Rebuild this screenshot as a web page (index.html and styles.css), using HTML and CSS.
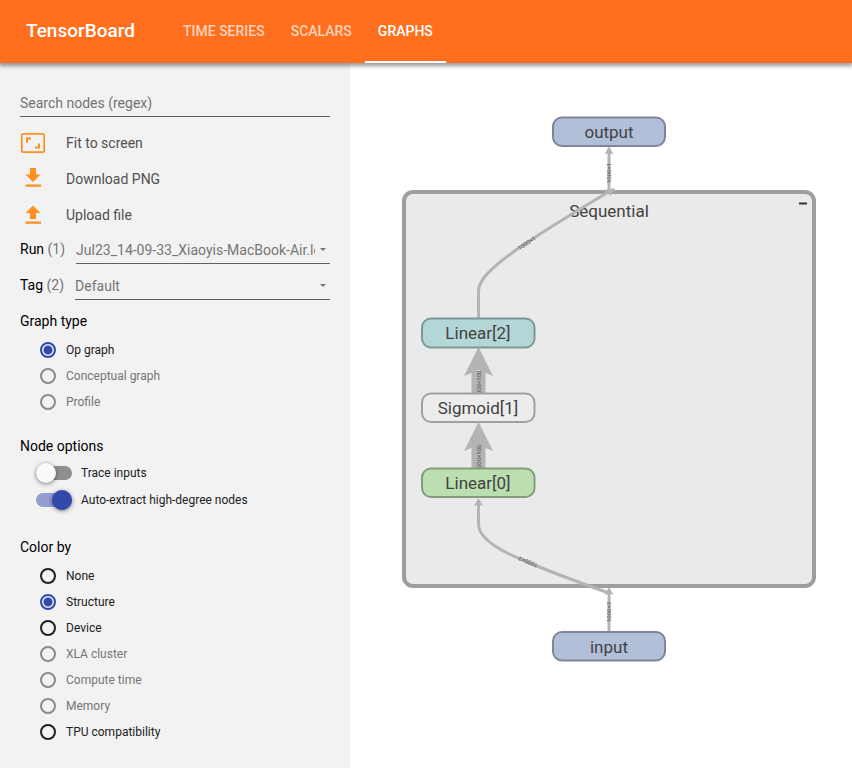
FILE: index.html
```html
<!DOCTYPE html>
<html lang="en">
<head>
<meta charset="utf-8">
<meta name="viewport" content="width=device-width, initial-scale=1">
<title>TensorBoard</title>
<link rel="stylesheet" href="styles.css">
</head>
<body>
<header class="toolbar">
  <h1 class="brand">TensorBoard</h1>
  <nav class="tabs">
    <a class="tab" href="#timeseries">TIME SERIES</a>
    <a class="tab" href="#scalars">SCALARS</a>
    <a class="tab tab-active" href="#graphs" aria-current="page">GRAPHS</a>
  </nav>
</header>
<div class="content">
  <aside class="sidebar">
    <input class="search" type="text" placeholder="Search nodes (regex)" aria-label="Search nodes (regex)">
    <div class="actions">
      <button class="action" type="button">
        <svg class="icon" viewBox="0 0 26 26"><path fill-rule="evenodd" d="M3 3h20a2 2 0 0 1 2 2v16a2 2 0 0 1-2 2H3a2 2 0 0 1-2-2V5a2 2 0 0 1 2-2zm-.3 1.700v16.600h20.600V4.700zM6 7.500h5v2H8v3H6zM20 18.500h-5v-2h3v-3h2z"/></svg>
        <span>Fit to screen</span>
      </button>
      <button class="action" type="button">
        <svg class="icon" viewBox="0 0 26 26"><path d="M10 2h6v6.500h4.500L13 16 5.500 8.500H10zM5.500 18.500h15.500v2.300h-15.500z"/></svg>
        <span>Download PNG</span>
      </button>
      <button class="action" type="button">
        <svg class="icon" viewBox="0 0 26 26"><path d="M10 17h6v-6h4.500L13 3.500 5.500 11H10zM5.500 19.500h15.500v2.300h-15.500z"/></svg>
        <span>Upload file</span>
      </button>
    </div>
    <div class="field">
      <label for="run">Run <span class="count">(1)</span></label>
      <div class="select-box"><select id="run"><option>Jul23_14-09-33_Xiaoyis-MacBook-Air.local</option></select></div>
    </div>
    <div class="field">
      <label for="tag">Tag <span class="count">(2)</span></label>
      <div class="select-box"><select id="tag"><option>Default</option></select></div>
    </div>
    <fieldset class="group group-type">
      <legend>Graph type</legend>
      <label class="choice"><input type="radio" name="type" checked>Op graph</label>
      <label class="choice"><input type="radio" name="type" disabled>Conceptual graph</label>
      <label class="choice"><input type="radio" name="type" disabled>Profile</label>
    </fieldset>
    <fieldset class="group group-toggles">
      <legend>Node options</legend>
      <label class="toggle"><input type="checkbox" role="switch">Trace inputs</label>
      <label class="toggle"><input type="checkbox" role="switch" checked>Auto-extract high-degree nodes</label>
    </fieldset>
    <fieldset class="group">
      <legend>Color by</legend>
      <label class="choice"><input type="radio" name="color">None</label>
      <label class="choice"><input type="radio" name="color" checked>Structure</label>
      <label class="choice"><input type="radio" name="color">Device</label>
      <label class="choice"><input type="radio" name="color" disabled>XLA cluster</label>
      <label class="choice"><input type="radio" name="color" disabled>Compute time</label>
      <label class="choice"><input type="radio" name="color" disabled>Memory</label>
      <label class="choice"><input type="radio" name="color">TPU compatibility</label>
    </fieldset>
  </aside>
  <main class="canvas">
    <svg class="graph" viewBox="350 63 502 705" preserveAspectRatio="xMidYMin meet">
      <rect class="scope" x="404" y="192" width="410" height="394" rx="9"/>
      <text class="name" x="609" y="217">Sequential</text>
      <path class="collapse" d="M799 203.500h8"/>

      <path class="edge" d="M609 192V152"/>
      <path class="head" d="M609 146l4.500 8.500-4.500-1.500-4.500 1.500z"/>
      <path class="edge" d="M478.500 318V291C478.500 280 491 268 516 250C546 229 580 209 610 191"/>
      <path class="head" d="M615 188l-4.500 8-2-3-4.500-3z"/>
      <path class="edge edge-wide" d="M478.500 394V371M478.500 469V446"/>
      <path class="head" d="M478.500 347l14.500 29-14.500-6-14.500 6zM478.500 422l14.500 29-14.500-6-14.500 6z"/>
      <path class="edge" d="M609 632V592"/>
      <path class="edge" d="M609 593C575 581 548 571 525 561C495 549 478.500 536 478.500 524V504"/>
      <path class="head" d="M609 587l4.500 8-4.500-1.500-4.500 1.500zM478.500 498l4.500 8-4.500-1.500-4.500 1.500z"/>

      <text class="shape" transform="translate(611 173) rotate(-90)">1000×1</text>
      <text class="shape" transform="translate(528 245) rotate(-33)">1000×1</text>
      <text class="shape" transform="translate(481 384) rotate(-90)">1000×100</text>
      <text class="shape" transform="translate(481 458) rotate(-90)">1000×100</text>
      <text class="shape" transform="translate(529 560) rotate(203)">1000×3</text>
      <text class="shape" transform="translate(611 612) rotate(-90)">1000×3</text>

      <rect class="node io" x="553" y="117.500" width="112" height="28.500" rx="9"/>
      <text class="name" x="609" y="138">output</text>
      <rect class="node linear-two" x="422" y="318.500" width="112.500" height="29" rx="9"/>
      <text class="name" x="478" y="339">Linear[2]</text>
      <rect class="node sigmoid" x="422" y="393.500" width="112.500" height="28.500" rx="9"/>
      <text class="name" x="478" y="414">Sigmoid[1]</text>
      <rect class="node linear-zero" x="422" y="468.500" width="112.500" height="28.500" rx="9"/>
      <text class="name" x="478" y="489">Linear[0]</text>
      <rect class="node io" x="553" y="632" width="112" height="28.500" rx="9"/>
      <text class="name" x="609" y="653">input</text>
    </svg>
  </main>
</div>
</body>
</html>
```
FILE: styles.css
```css
* {
  box-sizing: border-box;
}

body {
  display: flex;
  flex-direction: column;
  min-height: 100vh;
  margin: 0;
  background: #fff;
  color: #212121;
  font-family: Roboto, "Liberation Sans", sans-serif;
  font-size: 14px;
}

.toolbar {
  position: relative;
  z-index: 1;
  display: flex;
  align-items: stretch;
  gap: 35px;
  height: 63px;
  padding-left: 26px;
  background: #ff6f1e;
  box-shadow: 0 2px 4px 1px rgba(0, 0, 0, 0.4);
}

.brand {
  margin: 0;
  color: #fff;
  font-size: 19px;
  font-weight: 500;
  line-height: 62px;
}

.tabs {
  display: flex;
}

.tab {
  padding: 0 13px;
  border-bottom: 2px solid transparent;
  color: rgba(255, 255, 255, 0.7);
  font-weight: 500;
  line-height: 62px;
  text-decoration: none;
}

.tab-active {
  border-color: #fff;
  color: #fff;
}

.content {
  display: flex;
  flex: 1;
}

.sidebar {
  flex: 0 0 350px;
  padding: 30px 20px 0;
  background: #f2f2f2;
}

.search {
  display: block;
  width: 100%;
  height: 24px;
  padding: 0 0 3px;
  border: 0;
  border-bottom: 1px solid #616161;
  background: none;
  font: inherit;
}

.search::placeholder {
  color: #737373;
}

.actions {
  margin-top: 8px;
}

.action {
  display: flex;
  align-items: center;
  gap: 20px;
  width: 100%;
  height: 36px;
  padding: 0;
  border: 0;
  background: none;
  color: #505050;
  font: inherit;
}

.icon {
  width: 26px;
  height: 26px;
  fill: #ff8f20;
}

.field {
  display: flex;
  gap: 11px;
  height: 36px;
  color: #000;
  line-height: 32px;
}

.count {
  color: #757575;
}

.select-box {
  position: relative;
  flex: 1;
  min-width: 0;
  height: 31px;
  border-bottom: 1px solid #616161;
}

.select-box::after {
  content: "";
  position: absolute;
  top: 15px;
  right: 4px;
  border: 3px solid transparent;
  border-top-color: #757575;
  border-bottom: 0;
  pointer-events: none;
}

select {
  width: 100%;
  height: 34px;
  padding: 0 15px 0 0;
  appearance: none;
  border: 0;
  background: none;
  color: #757575;
  font: inherit;
}

.group {
  min-width: 0;
  margin: 0;
  padding: 0;
  border: 0;
}

.group-type {
  margin: 6px 0 21px;
}

.group-toggles {
  margin-bottom: 24px;
}

legend {
  margin-bottom: 6px;
  padding: 0;
  color: #000;
  line-height: 20px;
}

.group-toggles legend {
  margin-bottom: 3px;
}

.choice,
.toggle {
  display: flex;
  align-items: center;
  font-size: 12px;
}

.choice {
  gap: 10px;
  height: 26px;
  padding-left: 20px;
}

.choice input {
  width: 16px;
  height: 16px;
  margin: 0;
  appearance: none;
  border: 2px solid #212121;
  border-radius: 50%;
}

.choice input:checked {
  border-color: #3249ac;
  background: radial-gradient(circle, #3249ac 4px, transparent 5px);
}

.choice:has(:disabled) {
  color: #757575;
}

.choice input:disabled {
  border-color: #8a8a8a;
}

.toggle {
  gap: 9px;
  height: 27px;
  padding-left: 16px;
}

.toggle input {
  display: flex;
  align-items: center;
  width: 36px;
  height: 14px;
  margin: 0;
  appearance: none;
  border-radius: 7px;
  background: #8f8f8f;
}

.toggle input::before {
  content: "";
  width: 20px;
  height: 20px;
  border-radius: 50%;
  background: #fafafa;
  box-shadow: 0 1px 4px rgba(0, 0, 0, 0.5);
}

.toggle input:checked {
  justify-content: flex-end;
  background: #949fd0;
}

.toggle input:checked::before {
  background: #3249ac;
}

.canvas {
  flex: 1;
  min-width: 0;
}

.graph {
  display: block;
  width: 100%;
  max-height: calc(100vh - 63px);
}

.scope {
  fill: #eaeaea;
  stroke: #9e9e9e;
  stroke-width: 4px;
}

.node {
  stroke-width: 2px;
}

.io {
  fill: #b1bfd9;
  stroke: #7c8698;
}

.linear-two {
  fill: #b2d7d6;
  stroke: #7d9796;
}

.sigmoid {
  fill: #ececec;
  stroke: #a0a0a0;
}

.linear-zero {
  fill: #bbdfb0;
  stroke: #839c7b;
}

.name {
  fill: #424242;
  font-size: 17px;
  text-anchor: middle;
}

.collapse {
  stroke: #333;
  stroke-width: 2px;
}

.edge {
  fill: none;
  stroke: #b4b4b4;
  stroke-width: 3px;
}

.edge-wide {
  stroke-width: 14px;
}

.head {
  fill: #b4b4b4;
}

.shape {
  fill: #555;
  font-size: 6px;
  text-anchor: middle;
}
```
